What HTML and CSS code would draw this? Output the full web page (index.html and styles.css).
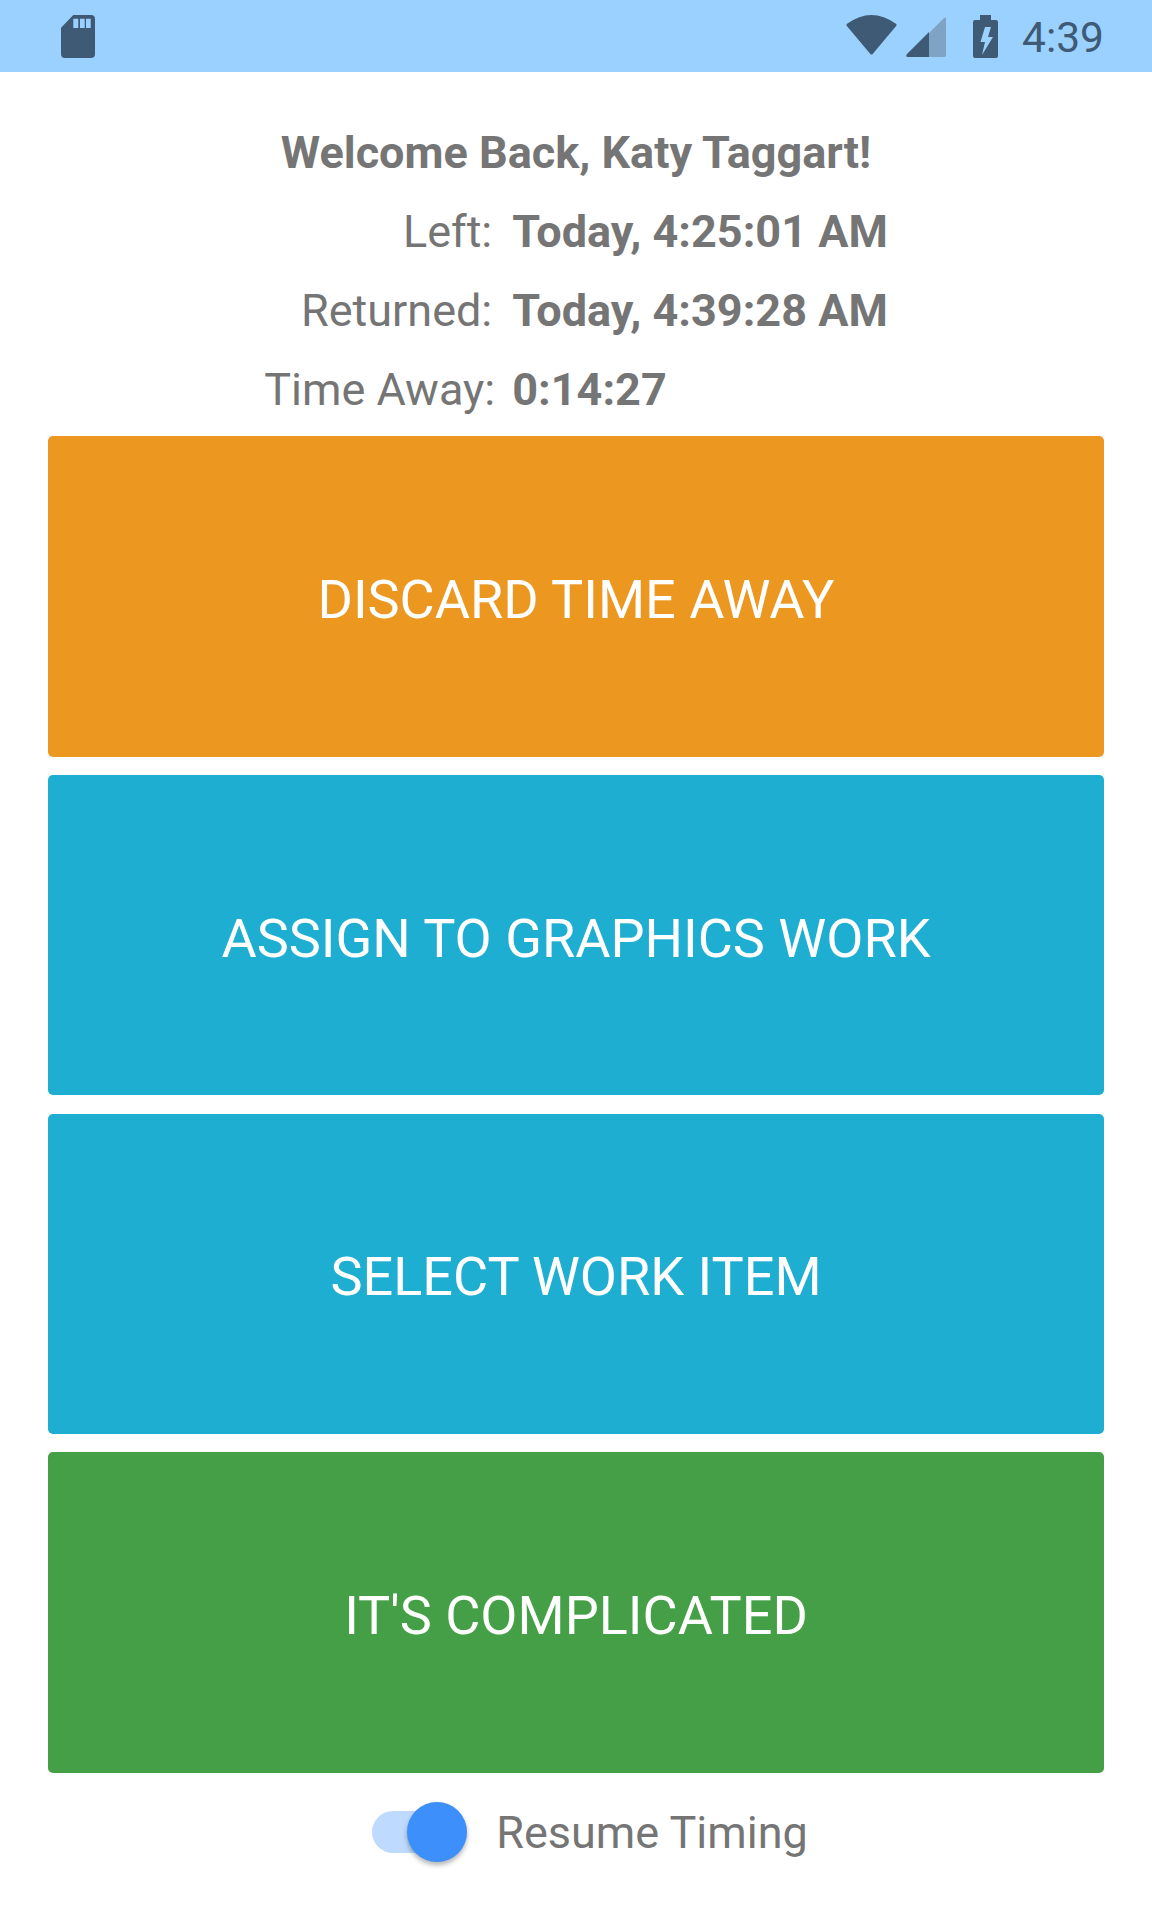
FILE: index.html
```html
<!DOCTYPE html>
<html lang="en">
<head>
  <meta charset="UTF-8">
  <meta name="viewport" content="width=device-width, initial-scale=1.0">
  <title>Welcome Back</title>
  <link rel="stylesheet" href="styles.css">
</head>
<body>

  <div class="status-bar">
    <svg class="sd-icon" width="34" height="43" viewBox="0 0 34 43">
      <path fill-rule="evenodd" fill="#3f5a75" d="M12.3 0H30Q34 0 34 4V39Q34 43 30 43H4Q0 43 0 39V12.7ZM12.3 3.7V13H17.3V3.7ZM19 3.7V13H23.7V3.7ZM25 3.7V13H29.7V3.7Z"/>
    </svg>
    <div class="status-right">
      <svg class="wifi-icon" width="51" height="41" viewBox="0 0 51 41">
        <path fill="#3f5a75" stroke="#3f5a75" stroke-width="3" stroke-linejoin="round" d="M2 11Q25.500 -6 49 11L25.500 39Z"/>
      </svg>
      <svg class="signal-icon" width="40" height="40" viewBox="0 0 40 40">
        <path fill="#7fa3c4" d="M40 2V38Q40 40 38 40H23V16L37 2Q40 -1 40 2Z"/>
        <path fill="#3f5a75" d="M23 15V40H2Q-1 40 1 37Z"/>
      </svg>
      <svg class="battery-icon" width="25" height="43" viewBox="0 0 25 43">
        <path fill-rule="evenodd" fill="#3f5a75" d="M7 0H18V5H23Q25 5 25 7V41Q25 43 23 43H2Q0 43 0 41V7Q0 5 2 5H7ZM12 12L7.500 27H12L9 40L20 22H15L18 12Z"/>
      </svg>
      <span class="clock">4:39</span>
    </div>
  </div>

  <div class="summary">
    <h2 class="welcome">Welcome Back, Katy Taggart!</h2>
    <div class="times">
      <span class="label short">Left:</span>
      <span class="value">Today, 4:25:01 AM</span>
      <span class="label short">Returned:</span>
      <span class="value">Today, 4:39:28 AM</span>
      <span class="label">Time Away:</span>
      <span class="value">0:14:27</span>
    </div>
  </div>

  <div class="actions">
    <button type="button" class="action orange">DISCARD TIME AWAY</button>
    <button type="button" class="action blue">ASSIGN TO GRAPHICS WORK</button>
    <button type="button" class="action blue">SELECT WORK ITEM</button>
    <button type="button" class="action green">IT'S COMPLICATED</button>
  </div>

  <div class="resume">
    <div class="switch">
      <div class="knob"></div>
    </div>
    <span class="resume-label">Resume Timing</span>
  </div>

</body>
</html>
```

FILE: styles.css
```css
/* Basic page setup */
body {
  font-family: Roboto, "Liberation Sans", sans-serif;
  background-color: #ffffff;
  color: #757575;
  margin: 0;
  padding: 0;
}

/* Status bar */
.status-bar {
  height: 72px;
  background-color: #9bd1ff;
  display: flex;
  justify-content: space-between;
  align-items: center;
  padding: 0 48px 0 61px;
  box-sizing: border-box;
}

.status-right {
  display: flex;
  align-items: center;
}

.wifi-icon {
  margin-top: -3px;
}

.signal-icon {
  margin-left: 9px;
  margin-top: 2px;
}

.battery-icon {
  margin-left: 27px;
}

.clock {
  margin-left: 24px;
  padding-top: 2px;
  font-size: 42.5px;
  color: #3f5a75;
}

/* Welcome text */
.summary {
  padding: 41px 0 7px;
}

.welcome {
  margin: 0;
  font-size: 45px;
  line-height: 79px;
  font-weight: 700;
  text-align: center;
}

.times {
  display: grid;
  grid-template-columns: max-content max-content;
  justify-content: center;
  column-gap: 17px;
  font-size: 45px;
  line-height: 79px;
}

.label {
  text-align: right;
}

.short {
  padding-right: 3px;
}

.value {
  font-weight: 700;
}

/* Big buttons */
.actions {
  display: flex;
  flex-direction: column;
  gap: 18.2px;
  padding: 0 48px;
}

.action {
  height: 320.6px;
  border: none;
  border-radius: 5px;
  padding: 6px 0 0;
  color: #ffffff;
  font-family: inherit;
  font-size: 54px;
}

.orange {
  background-color: #ec9720;
}

.blue {
  background-color: #1eaed1;
}

.green {
  background-color: #459f46;
}

/* Resume toggle */
.resume {
  display: flex;
  justify-content: center;
  align-items: center;
  height: 118px;
  padding-left: 28px;
}

.switch {
  width: 95px;
  height: 42px;
  border-radius: 21px;
  background-color: #bedbff;
  position: relative;
  margin-right: 29px;
}

.knob {
  position: absolute;
  right: 0;
  top: -9px;
  width: 60px;
  height: 60px;
  border-radius: 50%;
  background-color: #3d8ffb;
  box-shadow: 0 3px 5px rgba(0, 0, 0, 0.3);
}

.resume-label {
  padding-top: 2px;
  font-size: 45px;
}
```
